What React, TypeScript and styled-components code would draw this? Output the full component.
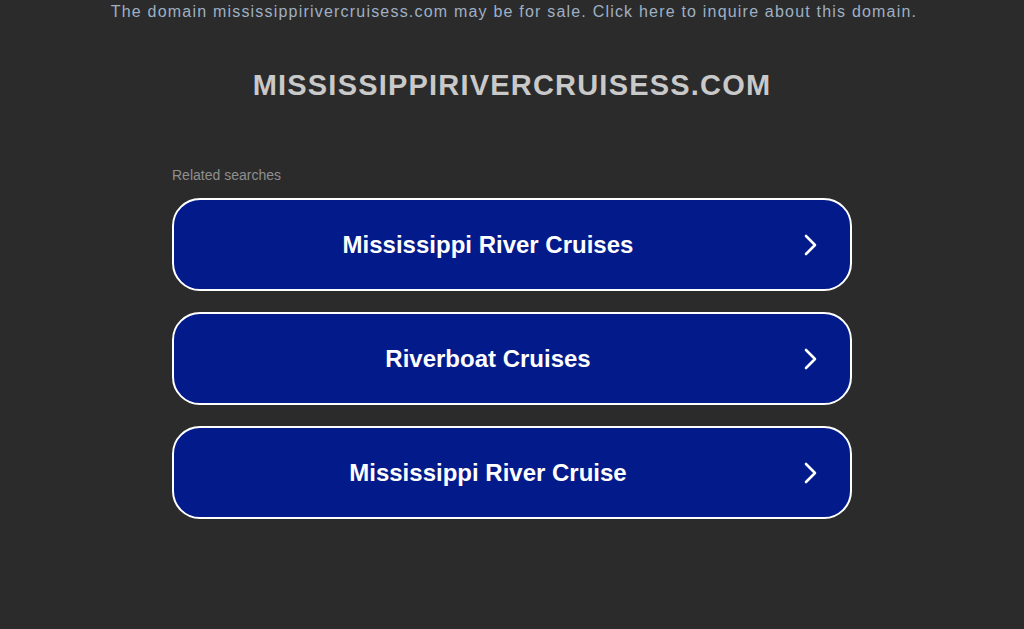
import styled, { createGlobalStyle } from "styled-components";

const GlobalStyle = createGlobalStyle`
  html, body {
    margin: 0;
    padding: 0;
    background: #2b2b2b;
    font-family: "Liberation Sans", Arial, sans-serif;
  }
`;

const Page = styled.div`
  min-height: 629px;
  background: #2b2b2b;
  display: flex;
  flex-direction: column;
  align-items: center;
`;

const SaleBanner = styled.a`
  display: block;
  margin-top: 2px;
  padding-left: 4px;
  font-size: 16px;
  line-height: 20px;
  letter-spacing: 1.2px;
  color: #9fb0c4;
  text-decoration: none;
`;

const Domain = styled.h1`
  margin: 46px 0 0;
  font-size: 29px;
  line-height: 34px;
  font-weight: 700;
  letter-spacing: 1.2px;
  color: #c9c9c9;
  text-transform: uppercase;
`;

const Related = styled.section`
  width: 680px;
  margin-top: 65px;
  display: flex;
  flex-direction: column;
`;

const Label = styled.div`
  font-size: 14px;
  line-height: 16px;
  color: #8f8f8f;
  margin-bottom: 15px;
`;

const List = styled.div`
  display: flex;
  flex-direction: column;
  gap: 21px;
`;

const Item = styled.a`
  box-sizing: border-box;
  height: 93px;
  display: flex;
  align-items: center;
  padding: 0 28px;
  background: #021a8a;
  border: 2px solid #ffffff;
  border-radius: 28px;
  color: #ffffff;
  text-decoration: none;
`;

const ItemText = styled.span`
  flex: 1;
  text-align: center;
  font-size: 24px;
  font-weight: 700;
  padding-right: 26px;
`;

const Arrow = styled.svg`
  width: 22px;
  height: 22px;
  flex: none;
`;

const searches = [
  "Mississippi River Cruises",
  "Riverboat Cruises",
  "Mississippi River Cruise",
];

function App() {
  return (
    <>
      <GlobalStyle />
      <Page>
        <SaleBanner href="#">
          The domain mississippirivercruisess.com may be for sale. Click here to inquire about this domain.
        </SaleBanner>
        <Domain>mississippirivercruisess.com</Domain>
        <Related>
          <Label>Related searches</Label>
          <List>
            {searches.map((s) => (
              <Item key={s} href="#">
                <ItemText>{s}</ItemText>
                <Arrow viewBox="0 0 22 22" fill="none" stroke="#fff" strokeWidth="2.6" strokeLinecap="round" strokeLinejoin="round">
                  <polyline points="6,2 15,11 6,20" />
                </Arrow>
              </Item>
            ))}
          </List>
        </Related>
      </Page>
    </>
  );
}

export default App;
